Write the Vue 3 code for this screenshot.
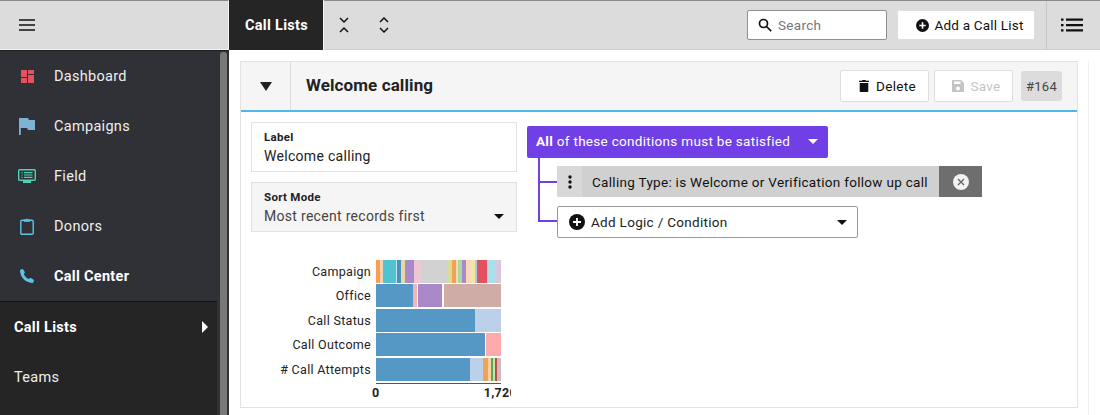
<template>
  <div class="app">
    <aside class="side">
      <div class="side__head">
        <svg class="burger" width="16" height="12" viewBox="0 0 16 12"><path d="M0 1h16M0 6h16M0 11h16" stroke="#111" stroke-width="1.6" /></svg>
      </div>
      <div class="side__body">
        <div class="side__col">
          <nav class="nav">
            <div v-for="item in navItems" :key="item.label" class="nav__item" :class="{ 'is-active': item.active }">
              <span class="nav__icon">
                <svg v-if="item.icon === 'dash'" width="13" height="13" viewBox="0 0 13 13" fill="#e4525f"><path d="M0 0h6v7H0zM7 0h6v4H7zM0 8h6v5H0zM7 5h6v8H7z" /></svg>
                <svg v-else-if="item.icon === 'flag'" width="16" height="17" viewBox="0 0 16 17" fill="#7fb3d5"><path d="M0 0h1.8v17H0zM1.8 0H9l1 2h6v10H9l-1-2H1.800z" /></svg>
                <svg v-else-if="item.icon === 'field'" width="18" height="14" viewBox="0 0 18 14" fill="none" stroke="#4fd0b8"><rect x=".7" y=".7" width="16.600" height="10.600" rx="1" stroke-width="1.400" /><path d="M3.500 3.700h1.200M6 3.700h8.500M3.500 6h1.200M6 6h8.500M3.500 8.300h1.200M6 8.300h8.500" stroke-width="1.200" /><path d="M5 13h8" stroke-width="2" /></svg>
                <svg v-else-if="item.icon === 'clip'" width="14" height="17" viewBox="0 0 14 17" fill="none" stroke="#5cc3e6" stroke-width="1.400"><rect x=".8" y="2.300" width="12.400" height="14" rx="1.200" /><path d="M4 3.500V1.800h1.800L7 .8l1.200 1H10v1.700z" fill="#5cc3e6" stroke-width=".6" /></svg>
                <svg v-else width="14" height="14" viewBox="0 0 14 14" fill="#5cc3e6"><path d="M2.800 0 5 3.200 3.800 5c.8 2.200 2.700 4.100 5.100 5l1.700-1.200L14 11l-.6 2.200c-.2.500-.6.800-1.200.8C5.500 13.700.4 8.500 0 1.800 0 1.200.3.800.8.600z" /></svg>
              </span>
              <span>{{ item.label }}</span>
            </div>
          </nav>
          <div class="sub">
            <div class="sub__item is-active">
              <span>Call Lists</span>
              <span class="sub__arrow" />
            </div>
            <div class="sub__item">Teams</div>
          </div>
        </div>
        <div class="scrollbar"><div class="scrollbar__thumb" /></div>
      </div>
    </aside>

    <main class="main">
      <header class="top">
        <div class="top__tab">Call Lists</div>
        <button class="top__icon">
          <svg width="10" height="16" viewBox="0 0 10 16" fill="none" stroke="#111" stroke-width="1.500"><path d="M1 1l4 4 4-4M1 15l4-4 4 4" /></svg>
        </button>
        <button class="top__icon">
          <svg width="10" height="16" viewBox="0 0 10 16" fill="none" stroke="#111" stroke-width="1.500"><path d="M1 5l4-4 4 4M1 11l4 4 4-4" /></svg>
        </button>
        <div class="search">
          <svg width="14" height="14" viewBox="0 0 14 14" fill="none" stroke="#111" stroke-width="1.700"><circle cx="5.500" cy="5.500" r="4" /><path d="m8.500 8.500 4.700 4.700" /></svg>
          <span>Search</span>
        </div>
        <button class="btn btn--add">
          <svg width="13" height="13" viewBox="0 0 13 13"><circle cx="6.500" cy="6.500" r="6.500" fill="#111" /><path d="M6.500 3.300v6.400M3.300 6.500h6.400" stroke="#fff" stroke-width="1.600" /></svg>
          Add a Call List
        </button>
        <div class="top__list">
          <svg width="22" height="14" viewBox="0 0 22 14" fill="#111"><path d="M0 .5h2.500v2.300H0zM0 5.900h2.500v2.300H0zM0 11.300h2.500v2.300H0zM5 .5h17v2.300H5zM5 5.900h17v2.300H5zM5 11.300h17v2.300H5z" /></svg>
        </div>
      </header>

      <section class="content">
        <div class="card">
          <div class="card__head">
            <div class="card__toggle"><span class="tri tri--lg" /></div>
            <h1 class="card__title">Welcome calling</h1>
            <button class="btn btn--delete">
              <svg width="10" height="12" viewBox="0 0 10 12" fill="#111"><path d="M3.500 0h3l.5.800h3V2H0V.8h3zM.7 3h8.600v8c0 .6-.4 1-1 1H1.700c-.6 0-1-.4-1-1z" /></svg>
              Delete
            </button>
            <button class="btn btn--save">
              <svg width="12" height="12" viewBox="0 0 12 12" fill="#c4c4c4"><path d="M1 0h8l3 3v8c0 .6-.4 1-1 1H1c-.6 0-1-.4-1-1V1C0 .4.400 0 1 0zm1 1.500V4h6.500V1.500zM6 6.500a2 2 0 1 0 0 4 2 2 0 0 0 0-4z" fill-rule="evenodd" /></svg>
              Save
            </button>
            <div class="card__id">#164</div>
          </div>

          <div class="card__body">
            <div class="left">
              <div class="field">
                <div class="field__label">Label</div>
                <div class="field__value">Welcome calling</div>
              </div>
              <div class="field field--select">
                <div class="field__label">Sort Mode</div>
                <div class="field__value field__value--row">
                  <span>Most recent records first</span>
                  <span class="tri" />
                </div>
              </div>
              <div class="chart">
                <div v-for="row in chartRows" :key="row.label" class="chart__row">
                  <div class="chart__label">{{ row.label }}</div>
                  <div class="chart__bar">
                    <span
                      v-for="(seg, i) in row.segments"
                      :key="i"
                      class="chart__seg"
                      :style="{ width: seg[0] + 'px', background: seg[1] }"
                    />
                  </div>
                </div>
                <div class="chart__axis">
                  <span class="chart__tick">0</span>
                  <span class="chart__tick chart__tick--end">1,720</span>
                </div>
              </div>
            </div>

            <div class="logic">
              <div class="logic__head">
                <span><b>All</b> of these conditions must be satisfied</span>
                <span class="tri tri--white" />
              </div>
              <div class="logic__tree">
                <div class="cond">
                  <div class="cond__drag">
                    <svg width="4" height="14" viewBox="0 0 4 14" fill="#111"><circle cx="2" cy="2" r="1.700" /><circle cx="2" cy="7" r="1.700" /><circle cx="2" cy="12" r="1.700" /></svg>
                  </div>
                  <div class="cond__text">Calling Type: is Welcome or Verification follow up call</div>
                  <div class="cond__close">
                    <svg width="16" height="16" viewBox="0 0 16 16"><circle cx="8" cy="8" r="8" fill="#f2f2f2" /><path d="m5 5 6 6m0-6-6 6" stroke="#666" stroke-width="1.400" /></svg>
                  </div>
                </div>
                <div class="add">
                  <svg width="16" height="16" viewBox="0 0 16 16"><circle cx="8" cy="8" r="8" fill="#111" /><path d="M8 4v8M4 8h8" stroke="#fff" stroke-width="1.800" /></svg>
                  <span class="add__text">Add Logic / Condition</span>
                  <span class="tri" />
                </div>
              </div>
            </div>
          </div>
        </div>
        <div class="content__rail" />
      </section>
    </main>
  </div>
</template>

<script setup>
const navItems = [
  { label: 'Dashboard', icon: 'dash' },
  { label: 'Campaigns', icon: 'flag' },
  { label: 'Field', icon: 'field' },
  { label: 'Donors', icon: 'clip' },
  { label: 'Call Center', icon: 'phone', active: true },
];

const blue = '#5598c6';
const chartRows = [
  {
    label: 'Campaign',
    segments: [
      [4, '#f5a052'], [3, '#f3d3b0'], [13, '#4fc3d2'], [1, '#c9e4ea'], [4, '#4e8fc0'], [4, '#e6d7a0'],
      [9, '#ab88c8'], [7, '#ecc8d2'], [27, '#d2d2d2'], [4, '#d8dc9c'], [4, '#f5a052'], [2, '#f8d8b8'],
      [4, '#a9d8a0'], [4, '#ab88c8'], [5, '#f8d8b8'], [4, '#f0e6a8'], [2, '#a9cfe8'],
      [10, '#e4525f'], [1, '#f5b8b8'], [8, '#a9e0ea'], [5, '#d8c8dc'],
    ],
  },
  { label: 'Office', segments: [[37, blue], [4, '#f3b6b6'], [1, '#fff'], [24, '#ab88c8'], [2, '#fff'], [57, '#d0aca6']] },
  { label: 'Call Status', segments: [[99, blue], [26, '#bcd0ea']] },
  { label: 'Call Outcome', segments: [[109, blue], [1, '#fff'], [15, '#ffaaaa']] },
  {
    label: '# Call Attempts',
    segments: [[94, blue], [13, '#bcd0ea'], [5, '#f5a052'], [3, '#f8d2a8'], [2, '#5fa84e'], [2, '#c8e0b0'], [2, '#c04a48'], [4, '#d0b8c0']],
  },
];
</script>

<style scoped>
.app {
  display: flex;
  width: 1100px;
  height: 415px;
  overflow: hidden;
  background: #fff;
  color: #111;
  font-family: Roboto, "Liberation Sans", sans-serif;
}

button { font-family: inherit; }

/* sidebar */
.side { display: flex; flex-direction: column; width: 229px; flex: none; background: #1f2023; }
.side__head {
  display: flex;
  align-items: center;
  height: 50px;
  padding-left: 19px;
  box-sizing: border-box;
  background: #dcdcdc;
  border-top: 1px solid #8a8a8a;
  border-right: 1px solid #f2f2f2;
  border-bottom: 1px solid #f2f2f2;
}
.side__body { display: flex; flex: 1; min-height: 0; margin-top: 1px; }
.side__col { display: flex; flex-direction: column; width: 217px; flex: none; }
.nav { height: 250px; background: #303136; border-bottom: 1px solid #151515; }
.nav__item {
  display: flex;
  align-items: center;
  height: 50px;
  color: #eee;
  font-size: 14.500px;
  letter-spacing: .3px;
}
.nav__item.is-active { color: #fff; font-weight: 700; }
.nav__icon { display: flex; justify-content: center; width: 54px; flex: none; }
.sub { flex: 1; background: #252525; }
.sub__item {
  display: flex;
  align-items: center;
  justify-content: space-between;
  height: 50px;
  padding: 0 9px 0 14px;
  color: #eee;
  font-size: 14.500px;
  letter-spacing: .3px;
}
.sub__item.is-active { color: #fff; font-weight: 700; }
.sub__arrow { border-left: 6px solid #fff; border-top: 6px solid transparent; border-bottom: 6px solid transparent; }
.scrollbar { flex: 1; padding: 1px 1px 0 3px; background: #303136; }
.scrollbar__thumb { width: 7px; height: 100%; background: #787878; border-radius: 3px 3px 0 0; }

/* top bar */
.main { display: flex; flex-direction: column; flex: 1; min-width: 0; }
.top {
  display: flex;
  align-items: center;
  height: 50px;
  flex: none;
  box-sizing: border-box;
  background: #dcdcdc;
  border-top: 1px solid #8a8a8a;
  border-bottom: 1px solid #cfcfcf;
}
.top__tab {
  display: flex;
  align-items: center;
  align-self: stretch;
  width: 95px;
  margin: -1px 0;
  padding-left: 16px;
  box-sizing: border-box;
  background: #252525;
  border-right: 1px solid #f2f2f2;
  color: #fff;
  font-size: 14.500px;
  font-weight: 700;
  letter-spacing: .3px;
}
.top__icon { display: flex; justify-content: center; width: 40px; padding: 0; background: none; border: 0; }
.search {
  display: flex;
  align-items: center;
  gap: 6px;
  width: 140px;
  height: 30px;
  margin-left: auto;
  padding-left: 10px;
  box-sizing: border-box;
  background: #fff;
  border: 1px solid #8f8f8f;
  border-radius: 2px;
  color: #777;
  font-size: 13.500px;
  letter-spacing: .3px;
}
.btn {
  display: flex;
  align-items: center;
  justify-content: center;
  gap: 6px;
  box-sizing: border-box;
  background: #fff;
  border: 1px solid #dedede;
  border-radius: 2px;
  color: #111;
  font-size: 13.500px;
  letter-spacing: .3px;
}
.btn--add { width: 138px; height: 30px; margin-left: 10px; padding: 0 0 0 8px; gap: 5px; letter-spacing: .2px; }
.top__list {
  display: flex;
  align-items: center;
  justify-content: center;
  align-self: stretch;
  width: 54px;
  margin-left: 11px;
  padding-right: 3px;
  border-left: 1px solid #c6c6c6;
  box-sizing: border-box;
}

/* card */
.content { display: flex; gap: 10px; flex: 1; min-height: 0; padding: 11px 0 7px 11px; }
.content__rail { flex: 1; margin-bottom: -7px; border-left: 1px solid #f0f0f0; }
.card { width: 838px; flex: none; box-sizing: border-box; border: 1px solid #e2e2e2; }
.card__head {
  display: flex;
  align-items: center;
  height: 48px;
  background: #f5f5f5;
  border-bottom: 2px solid #4fb8e6;
  padding-right: 15px;
}
.card__toggle {
  display: flex;
  align-items: center;
  justify-content: center;
  align-self: stretch;
  width: 49px;
  border-right: 1px solid #dedede;
}
.card__title { flex: 1; margin: 0 0 2px 15px; font-size: 17px; font-weight: 700; letter-spacing: .1px; color: #222; }
.btn--delete { width: 89px; height: 32px; padding: 0 0 0 6px; gap: 7px; }
.btn--save { width: 79px; height: 32px; margin-left: 5px; padding: 0 0 0 6px; color: #c4c4c4; }
.card__id {
  display: flex;
  align-items: center;
  justify-content: center;
  width: 41px;
  height: 30px;
  margin-left: 8px;
  background: #dcdcdc;
  border-radius: 3px;
  color: #444;
  font-size: 13px;
  letter-spacing: .3px;
}
.tri { width: 0; height: 0; flex: none; border-left: 6px solid transparent; border-right: 6px solid transparent; border-top: 7px solid #111; }
.tri--lg { border-top: 9px solid #222; }
.tri--white { border-top-color: #fff; border-left-width: 5px; border-right-width: 5px; border-top-width: 5px; }

.card__body { display: flex; padding: 10px 10px 0; gap: 10px; }
.left { width: 266px; flex: none; }
.field {
  display: flex;
  flex-direction: column;
  justify-content: center;
  height: 50px;
  margin-bottom: 10px;
  padding: 3px 12px 0;
  box-sizing: border-box;
  border: 1px solid #e2e2e2;
}
.field--select { background: #f5f5f5; }
.field__label { font-size: 11.500px; font-weight: 700; letter-spacing: .3px; color: #222; line-height: 15px; }
.field__value { margin-top: 1px; font-size: 14px; line-height: 21px; color: #222; letter-spacing: .3px; }
.field--select .field__value { color: #444; }
.field__value--row { display: flex; align-items: center; justify-content: space-between; }
.field__value--row .tri { border-left-width: 5px; border-right-width: 5px; border-top-width: 5px; }

.chart { margin-top: 27px; font-size: 12.500px; letter-spacing: .3px; color: #222; width: 260px; overflow: hidden; }
.chart__row { display: flex; align-items: center; height: 24.500px; }
.chart__label { width: 125px; padding-right: 5px; box-sizing: border-box; text-align: right; white-space: nowrap; }
.chart__bar { display: flex; width: 125px; height: 23px; }
.chart__seg { display: block; height: 100%; flex: none; }
.chart__axis {
  display: flex;
  justify-content: space-between;
  width: 125px;
  margin: 1px 0 0 125px;
  border-top: 1px solid #555;
  font-weight: 700;
  line-height: 17px;
}
.chart__tick { margin-left: -4px; }
.chart__tick--end { margin-right: -16px; }

/* conditions */
.logic { flex: 1; padding-top: 4px; }
.logic__head {
  display: flex;
  align-items: center;
  justify-content: space-between;
  width: 301px;
  height: 32px;
  padding: 0 10px 2px 9px;
  box-sizing: border-box;
  background: #7040e6;
  border-radius: 2px;
  color: #fff;
  font-size: 13.500px;
  letter-spacing: .3px;
  white-space: nowrap;
}
.logic__head b { font-weight: 700; }
.logic__tree { position: relative; padding: 8px 0 0 30px; }
.logic__tree::before {
  content: "";
  position: absolute;
  left: 11px;
  top: 0;
  width: 19px;
  height: 64px;
  box-sizing: border-box;
  border-left: 2px solid #7040e6;
  border-bottom: 2px solid #7040e6;
}
.logic__tree::after {
  content: "";
  position: absolute;
  left: 11px;
  top: 23px;
  width: 19px;
  height: 2px;
  background: #7040e6;
}
.cond { display: flex; align-items: center; width: 425px; height: 31px; background: #d0d0d0; font-size: 13.500px; letter-spacing: .3px; color: #111; }
.cond__drag { display: flex; align-items: center; justify-content: center; align-self: stretch; width: 25px; flex: none; background: #d8d8d8; }
.cond__text { flex: 1; padding-left: 10px; white-space: nowrap; }
.cond__close { display: flex; align-items: center; justify-content: center; align-self: stretch; width: 43px; flex: none; background: #6e6e6e; }
.add {
  display: flex;
  align-items: center;
  width: 301px;
  height: 32px;
  margin-top: 9px;
  padding: 0 10px 0 11px;
  box-sizing: border-box;
  background: #fff;
  border: 1px solid #9a9a9a;
  border-radius: 2px;
  font-size: 13.500px;
  letter-spacing: .3px;
  color: #222;
}
.add__text { flex: 1; margin-left: 6px; }
.add .tri { border-left-width: 5px; border-right-width: 5px; border-top-width: 5px; }
</style>

<style>
html, body { margin: 0; background: #fff; }
</style>
